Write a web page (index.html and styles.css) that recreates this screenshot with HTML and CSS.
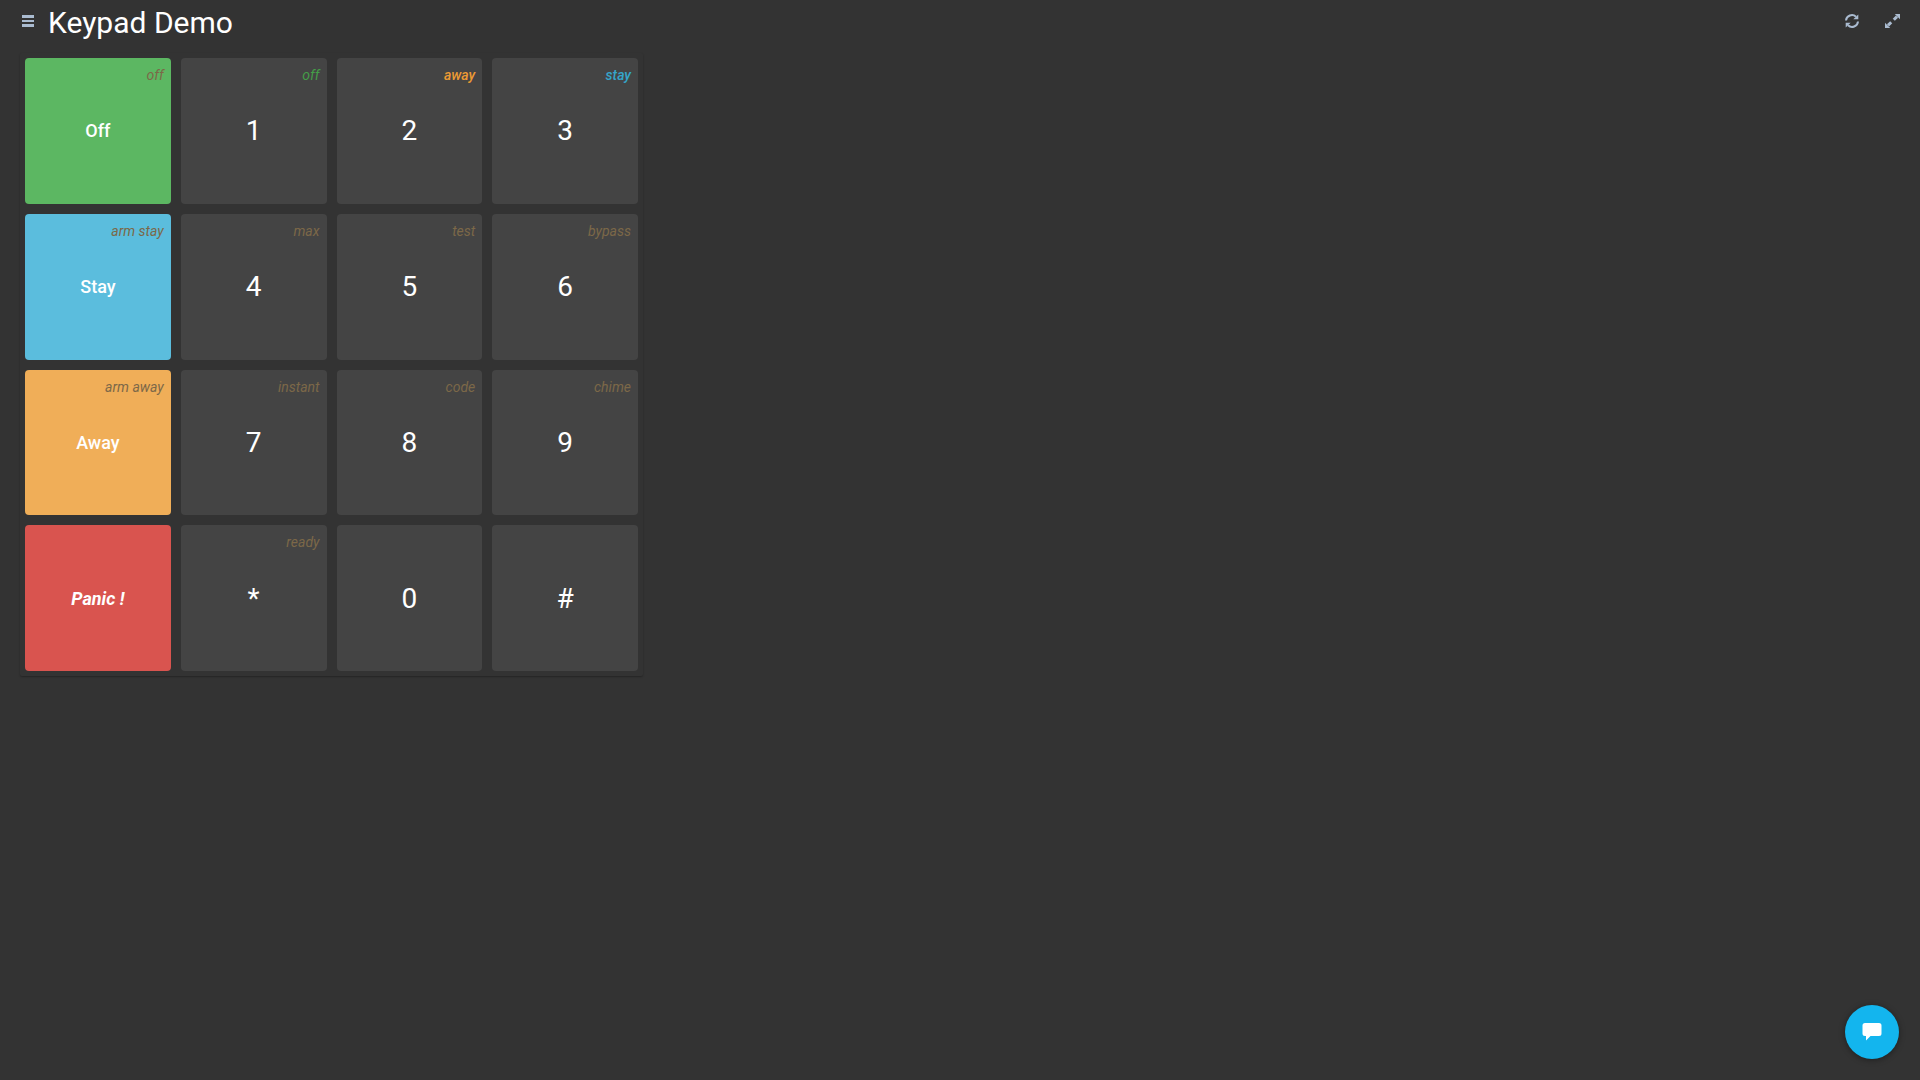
FILE: index.html
```html
<!DOCTYPE html>
<html lang="en">
    <head>
        <meta charset="utf-8">
        <title>Keypad Demo</title>
        <link rel="stylesheet" href="styles.css">
    </head>

    <body>
        <header class="header">
            <button class="iconBtn" aria-label="Menu">
                <svg width="12" height="14" viewBox="0 0 12 14"><path d="M0 1h12v3H0zM0 6h12v2H0zM0 10h12v3H0z"/></svg>
            </button>
            <h1>Keypad Demo</h1>
            <div class="tools">
                <button class="iconBtn" aria-label="Refresh">
                    <svg width="14" height="14" viewBox="0 0 14 14"><path class="line" d="M1 6.5A5.9 5.9 0 0 1 11 2.8M13 7.5A5.9 5.9 0 0 1 3 11.2"/><path d="M13.3 .4v4.8H8.3zM.7 13.6V8.8h5z"/></svg>
                </button>
                <button class="iconBtn" aria-label="Full screen">
                    <svg width="15" height="14" viewBox="0 0 15 14"><path class="thick" d="M8.8 5.8L12 2.6M6.2 8.2L3 11.4"/><path d="M15 0v5.2L9.8 0zM0 14V8.8L5.2 14z"/></svg>
                </button>
            </div>
        </header>

        <main class="content">
            <div class="keypad">
                <button class="key action off"><span class="hint">off</span>Off</button>
                <button class="key"><span class="hint green">off</span>1</button>
                <button class="key"><span class="hint orange">away</span>2</button>
                <button class="key"><span class="hint blue">stay</span>3</button>

                <button class="key action stay"><span class="hint">arm stay</span>Stay</button>
                <button class="key"><span class="hint">max</span>4</button>
                <button class="key"><span class="hint">test</span>5</button>
                <button class="key"><span class="hint">bypass</span>6</button>

                <button class="key action away"><span class="hint">arm away</span>Away</button>
                <button class="key"><span class="hint">instant</span>7</button>
                <button class="key"><span class="hint">code</span>8</button>
                <button class="key"><span class="hint">chime</span>9</button>

                <button class="key action panic">Panic !</button>
                <button class="key"><span class="hint">ready</span>*</button>
                <button class="key">0</button>
                <button class="key">#</button>
            </div>
        </main>

        <button class="chat" aria-label="Chat">
            <svg width="20" height="18" viewBox="0 0 20 18"><path d="M3 0h14a2.5 2.5 0 0 1 2.5 2.5v8a2.5 2.5 0 0 1-2.5 2.5H8.5L4 17.5V13H3A2.5 2.5 0 0 1 .5 10.5v-8A2.5 2.5 0 0 1 3 0z"/></svg>
        </button>
    </body>
</html>
```

FILE: styles.css
```css
* {
    box-sizing: border-box;
}
body {
    margin: 0;
    background-color: #333;
    color: #fff;
    font-family: Roboto, sans-serif;
}
button {
    border: 0;
    padding: 0;
    font-family: inherit;
    color: inherit;
    cursor: pointer;
}
svg {
    display: block;
}

/* top bar */
.header {
    display: flex;
    align-items: flex-start;
    height: 44px;
    padding: 0 19px 0 21px;
}
.header h1 {
    margin: 0 0 0 13px;
    font-size: 30px;
    font-weight: 400;
    line-height: 46px;
}
.tools {
    display: flex;
    gap: 24px;
    margin-left: auto;
}
.iconBtn {
    background: none;
    padding: 14px 1px 0;
}
.iconBtn svg {
    fill: #aabbd0;
}
.iconBtn .line, .iconBtn .thick {
    fill: none;
    stroke: #aabbd0;
    stroke-width: 2;
}
.iconBtn .thick {
    stroke-width: 3;
}

/* keypad */
.content {
    padding: 9px 20px 20px;
}
.keypad {
    display: grid;
    grid-template-columns: repeat(4, 1fr);
    gap: 10px;
    max-width: 623px;
    padding: 5px;
    border-radius: 2px;
    box-shadow: 0 1px 2px rgba(0, 0, 0, 0.3);
}
.key {
    position: relative;
    aspect-ratio: 1;
    border-radius: 4px;
    background-color: #444;
    font-size: 28px;
}
.action {
    font-size: 18px;
    font-weight: 500;
}
.off {
    background-color: #5cb762;
}
.stay {
    background-color: #5bbddd;
}
.away {
    background-color: #f0ae58;
}
.panic {
    background-color: #d9544f;
    font-style: italic;
    font-weight: 700;
}
.hint {
    position: absolute;
    top: 8px;
    right: 7px;
    font-size: 14px;
    font-style: italic;
    font-weight: 400;
    line-height: 18px;
    color: #7c6848;
}
.green {
    color: #449d48;
}
.orange {
    color: #ec9a34;
    font-weight: 500;
}
.blue {
    color: #35a5c9;
    font-weight: 500;
}

/* chat bubble */
.chat {
    position: fixed;
    right: 21px;
    bottom: 21px;
    display: flex;
    align-items: center;
    justify-content: center;
    width: 54px;
    height: 54px;
    border-radius: 50%;
    background-color: #13b5ee;
    box-shadow: 0 1px 6px rgba(0, 0, 0, 0.4);
}
.chat svg {
    fill: #fff;
}
```
